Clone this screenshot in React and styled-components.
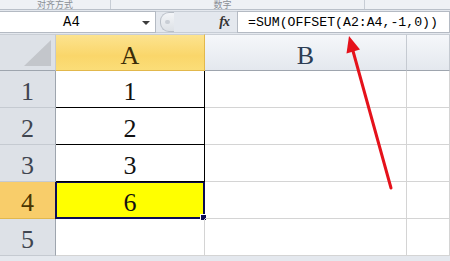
import styled, { createGlobalStyle } from "styled-components";

const GlobalStyle = createGlobalStyle`
  body {
    margin: 0;
    width: 450px;
    height: 261px;
    overflow: hidden;
    background: #ffffff;
    font-family: "Liberation Serif", serif;
  }
`;

const Page = styled.div`
  position: relative;
  width: 450px;
  height: 261px;
  overflow: hidden;
  background: #e4e8ee;
`;

const Ribbon = styled.div`
  display: flex;
  height: 9px;
  background: #eef1f5;
  border-bottom: 1px solid #b9c0c9;
  overflow: hidden;
`;

const RibbonGroup = styled.div`
  width: ${(p) => p.$width}px;
  border-right: 1px solid #c7cdd5;
  display: flex;
  justify-content: center;
  align-items: flex-end;
  overflow: hidden;
`;

const RibbonLabel = styled.span`
  font-family: "Noto Sans CJK SC", sans-serif;
  font-size: 9px;
  line-height: 9px;
  color: #8a8f96;
  margin-left: ${(p) => p.$shift || 0}px;
`;

const FormulaBar = styled.div`
  display: flex;
  height: 22px;
  margin-top: 1px;
  background: #e4e8ee;
`;

const NameBox = styled.div`
  position: relative;
  width: 156px;
  background: #ffffff;
  border: 1px solid #b4bac3;
  border-left: none;
  display: flex;
  align-items: center;
  justify-content: center;
  font-family: "Liberation Mono", monospace;
  font-size: 14px;
  color: #000;
  box-sizing: border-box;
  padding-right: 12px;
`;

const Caret = styled.span`
  position: absolute;
  right: 5px;
  top: 9px;
  width: 0;
  height: 0;
  border-left: 4px solid transparent;
  border-right: 4px solid transparent;
  border-top: 4px solid #3c3c3c;
`;

const Middle = styled.div`
  width: 81px;
  display: flex;
  align-items: center;
  justify-content: space-between;
  padding: 0 8px 0 4px;
  box-sizing: border-box;
  border-top: 1px solid #c7cdd5;
  border-bottom: 1px solid #c7cdd5;
`;

const Bump = styled.span`
  width: 13px;
  height: 18px;
  border-radius: 9px 0 0 9px;
  border: 1px solid #b9bfc7;
  border-right: none;
  background: linear-gradient(#f3f5f8, #dde1e6);
  display: flex;
  align-items: center;
  justify-content: center;
  &::after {
    content: "";
    width: 5px;
    height: 4px;
    border-radius: 3px;
    background: #c9ced5;
  }
`;

const Fx = styled.span`
  font-family: "Liberation Serif", serif;
  font-style: italic;
  font-weight: bold;
  font-size: 14px;
  color: #333;
  letter-spacing: -1px;
`;

const FormulaInput = styled.div`
  flex: 1;
  background: #ffffff;
  border: 1px solid #b4bac3;
  display: flex;
  align-items: center;
  padding-left: 10px;
  font-family: "Liberation Mono", monospace;
  font-size: 13.2px;
  color: #000;
`;

const Grid = styled.div`
  display: grid;
  grid-template-columns: 56px 149px 202px 1fr;
  grid-auto-rows: 37px;
  margin-top: 1px;
  background: #ffffff;
`;

const Corner = styled.div`
  position: relative;
  background: #dde1e7;
  border-right: 1px solid #c5cad1;
  border-bottom: 1px solid #9ea5ae;
  border-top: 1px solid #c9ced5;
  &::after {
    content: "";
    position: absolute;
    right: 4px;
    bottom: 4px;
    width: 0;
    height: 0;
    border-left: 27px solid transparent;
    border-bottom: 26px solid #c3c6cb;
  }
`;

const ColHeader = styled.div`
  display: flex;
  align-items: center;
  justify-content: center;
  padding-top: 6px;
  font-size: 26px;
  border-top: 1px solid #c9ced5;
  border-right: 1px solid ${(p) => (p.$active ? "#e2b84c" : "#c5cad1")};
  border-bottom: 1px solid ${(p) => (p.$active ? "#e2b84c" : "#9ea5ae")};
  background: ${(p) =>
    p.$active
      ? "linear-gradient(#fce38f, #fad66a 60%, #fbdd78)"
      : "linear-gradient(#f5f7fa, #e4e8ee)"};
  color: ${(p) => (p.$active ? "#3a2c08" : "#2d3e55")};
`;

const RowHeader = styled.div`
  display: flex;
  align-items: center;
  justify-content: center;
  padding-top: 5px;
  font-size: 26px;
  border-right: 1px solid ${(p) => (p.$active ? "#e2b84c" : "#9ea5ae")};
  border-bottom: 1px solid ${(p) => (p.$active ? "#e2b84c" : "#c5cad1")};
  background: ${(p) => (p.$active ? "#f8cd6a" : "#dde1e7")};
  color: ${(p) => (p.$active ? "#4a3500" : "#3f4550")};
`;

const Cell = styled.div`
  position: relative;
  display: flex;
  align-items: center;
  justify-content: center;
  padding-top: 5px;
  font-size: 26px;
  color: #111;
  box-sizing: border-box;
  border-right: 1px solid #d4d4d4;
  border-bottom: 1px solid #d4d4d4;
`;

const BorderedCell = styled(Cell)`
  border-right: 1px solid #000;
  border-bottom: 1px solid #000;
`;

const SelectedCell = styled(Cell)`
  background: #ffff00;
  border: 2px solid #0c0c55;
  border-top-width: 1px;
  margin-left: -1px;
  &::after {
    content: "";
    position: absolute;
    right: -4px;
    bottom: -4px;
    width: 5px;
    height: 5px;
    background: #0c0c55;
    border: 1px solid #fff;
  }
`;

const Arrow = styled.svg`
  position: absolute;
  left: 0;
  top: 0;
  pointer-events: none;
`;

const rows = [
  { n: 1, v: "1" },
  { n: 2, v: "2" },
  { n: 3, v: "3" },
  { n: 4, v: "6", selected: true },
  { n: 5, v: "" },
];

export default function App() {
  return (
    <Page>
      <GlobalStyle />
      <Ribbon>
        <RibbonGroup $width={110}>
          <RibbonLabel>对齐方式</RibbonLabel>
        </RibbonGroup>
        <RibbonGroup $width={253}>
          <RibbonLabel $shift={-30}>数字</RibbonLabel>
        </RibbonGroup>
      </Ribbon>
      <FormulaBar>
        <NameBox>
          A4
          <Caret />
        </NameBox>
        <Middle>
          <Bump />
          <Fx>fx</Fx>
        </Middle>
        <FormulaInput>=SUM(OFFSET(A2:A4,-1,0))</FormulaInput>
      </FormulaBar>
      <Grid>
        <Corner />
        <ColHeader $active>A</ColHeader>
        <ColHeader>B</ColHeader>
        <ColHeader />
        {rows.map((r) => {
          const ValueCell = r.selected
            ? SelectedCell
            : r.v
            ? BorderedCell
            : Cell;
          return [
            <RowHeader key={`h${r.n}`} $active={r.selected}>
              {r.n}
            </RowHeader>,
            <ValueCell key={`a${r.n}`}>{r.v}</ValueCell>,
            <Cell key={`b${r.n}`} />,
            <Cell key={`c${r.n}`} />,
          ];
        })}
      </Grid>
      <Arrow width="450" height="261" viewBox="0 0 450 261">
        <line
          x1="391"
          y1="188"
          x2="353"
          y2="51"
          stroke="#e5121b"
          strokeWidth="3"
          strokeLinecap="round"
        />
        <polygon points="349,36 360,49.5 346.5,53.5" fill="#e5121b" />
      </Arrow>
    </Page>
  );
}
